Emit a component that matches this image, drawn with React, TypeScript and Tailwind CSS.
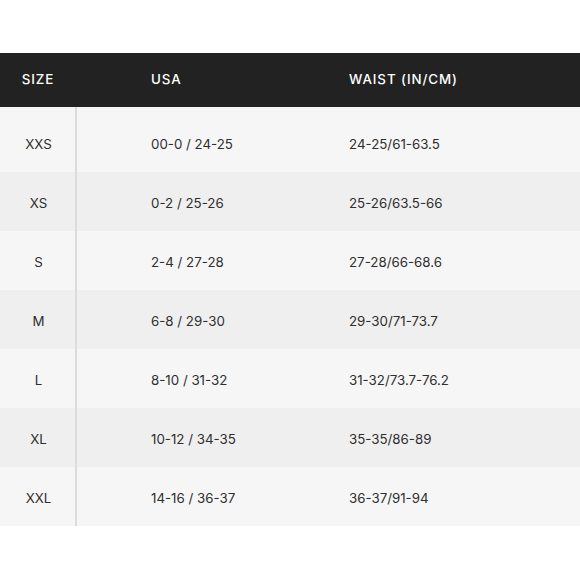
import React from 'react';

const rows = [
  ['XXS', '00-0 / 24-25', '24-25/61-63.5'],
  ['XS', '0-2 / 25-26', '25-26/63.5-66'],
  ['S', '2-4 / 27-28', '27-28/66-68.6'],
  ['M', '6-8 / 29-30', '29-30/71-73.7'],
  ['L', '8-10 / 31-32', '31-32/73.7-76.2'],
  ['XL', '10-12 / 34-35', '35-35/86-89'],
  ['XXL', '14-16 / 36-37', '36-37/91-94'],
];

export default function App() {
  return (
    <div className="w-[580px] h-[580px] bg-white pt-[53px] font-['Inter',sans-serif] text-[13.3px] text-[#2e2e2e]">
      <div className="flex h-[54px] items-center bg-[#222] text-white tracking-[0.07em] font-medium">
        <div className="w-[76px] text-center">SIZE</div>
        <div className="w-[273px] pl-[75px]">USA</div>
        <div className="flex-1">WAIST (IN/CM)</div>
      </div>
      {rows.map(([size, usa, waist], i) => (
        <div
          key={size}
          className={`flex ${i === 0 ? 'h-[65px]' : 'h-[59px]'} ${i % 2 === 0 ? 'bg-[#f6f6f6]' : 'bg-[#efefef]'}`}
        >
          <div className={`w-[77px] flex items-center justify-center border-r-2 border-[#dcdcdc] pl-[2px] ${i === 0 ? 'pt-[11px]' : 'pt-[4px]'}`}>{size}</div>
          <div className={`w-[272px] flex items-center pl-[74px] ${i === 0 ? 'pt-[11px]' : 'pt-[4px]'}`}>{usa}</div>
          <div className={`flex-1 flex items-center ${i === 0 ? 'pt-[11px]' : 'pt-[4px]'}`}>{waist}</div>
        </div>
      ))}
    </div>
  );
}
